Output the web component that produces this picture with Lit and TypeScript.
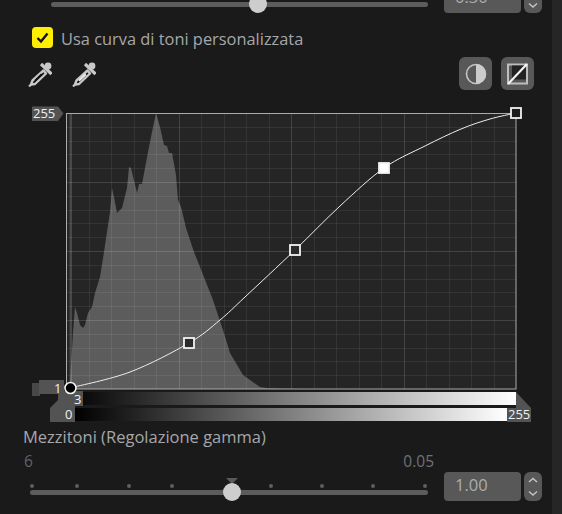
import { LitElement, html, css, svg } from "lit";
import { customElement, property } from "lit/decorators.js";

const HIST: [number, number][] = [[69,389],[70,383],[73,333],[75,307],[77,313],[80,325],[83,328],[85,325],[88,313],[92,307],[95,293],[100,277],[104,252],[107,232],[110,212],[112,188],[114,197],[117,213],[122,208],[127,188],[129,167],[131,168],[137,193],[139,184],[142,184],[148,152],[152,132],[156,113],[160,127],[164,145],[167,146],[169,153],[172,153],[176,175],[178,200],[181,207],[183,215],[186,228],[194,252],[200,267],[213,300],[223,330],[230,353],[243,375],[260,387],[267,388],[300,389]];
const CURVE: [number, number][] = [[70,388],[130,372],[189,343],[220,320],[245,297],[295,250],[340,206],[384,168],[425,146],[461,129],[490,119],[516,113]];

function spline(pts: [number, number][]): string {
  let d = `M${pts[0][0]} ${pts[0][1]}`;
  for (let i = 0; i < pts.length - 1; i++) {
    const p0 = pts[Math.max(i - 1, 0)], p1 = pts[i], p2 = pts[i + 1], p3 = pts[Math.min(i + 2, pts.length - 1)];
    const c1 = [p1[0] + (p2[0] - p0[0]) / 6, p1[1] + (p2[1] - p0[1]) / 6];
    const c2 = [p2[0] - (p3[0] - p1[0]) / 6, p2[1] - (p3[1] - p1[1]) / 6];
    d += ` C${c1[0]} ${c1[1]} ${c2[0]} ${c2[1]} ${p2[0]} ${p2[1]}`;
  }
  return d;
}

const FONT = css`"Open Sans", "Noto Sans", sans-serif`;

@customElement("value-slider")
class ValueSlider extends LitElement {
  @property({ type: Array }) ticks: number[] = [];
  @property({ type: Number }) thumb = 0;
  @property({ type: Boolean }) marker = false;
  @property() value = "";
  @property({ type: Number }) left = 0;

  static styles = css`
    :host { display: flex; align-items: flex-start; font-family: ${FONT}; }
    .rail { position: relative; width: 398px; height: 29px; flex: none; margin-right: 16px; }
    .track { position: absolute; left: 0; right: 0; top: 18px; height: 5px; border-radius: 3px; background: #5c5c5c; }
    .tick { position: absolute; top: 12px; width: 4px; height: 4px; margin-left: -2px; border-radius: 50%; background: #5e5e5e; }
    .thumb { position: absolute; top: 11px; width: 18px; height: 18px; margin-left: -9px; border-radius: 50%; background: #cdcdcd; }
    .marker { position: absolute; top: 6px; margin-left: -6px; width: 0; height: 0; border-left: 6px solid transparent; border-right: 6px solid transparent; border-top: 6px solid #5a5a5a; }
    .input { width: 77px; height: 29px; box-sizing: border-box; flex: none; background: #585858; border-radius: 4px; color: #adadad; font-size: 16.5px; line-height: 26px; padding-left: 11px; }
    .spin { width: 18px; height: 29px; flex: none; margin-left: 3px; background: #585858; border-radius: 6px; display: block; }
  `;

  render() {
    return html`
      <div class="rail" style="width:${428 - this.left}px">
        <div class="track"></div>
        ${this.ticks.map((t) => html`<div class="tick" style="left:${t - this.left}px"></div>`)}
        ${this.marker ? html`<div class="marker" style="left:${this.thumb - this.left}px"></div>` : ""}
        <div class="thumb" style="left:${this.thumb - this.left}px"></div>
      </div>
      <div class="input">${this.value}</div>
      <svg class="spin" viewBox="0 0 18 29" fill="none" stroke="#c4c4c4" stroke-width="1.5">
        <path d="M5 10l4-3.500 4 3.500M5 19.500l4 3.500 4-3.500"/>
      </svg>
    `;
  }
}

@customElement("app-root")
class AppRoot extends LitElement {
  static styles = css`
    :host { display: block; width: 562px; height: 514px; overflow: hidden; background: #1a1a1a; font-family: ${FONT}; color: #a4a8ac; }
    .page { display: flex; height: 514px; }
    .main { width: 552px; flex: none; }
    .scroll { flex: 1; background: #262626; }
    .top { margin: -16px 0 0 30px; }
    .top.first { margin-left: 51px; }
    .check { display: flex; align-items: center; gap: 8px; margin: 14px 0 0 32px; height: 21px; font-size: 16.4px; }
    .check span { padding-top: 1px; }
    .box { width: 21px; height: 21px; border-radius: 4px; background: #ffee00; display: block; flex: none; }
    .tools { display: flex; align-items: center; margin: 9px 18px 0 28px; height: 33px; }
    .drop { width: 24px; height: 26px; display: block; margin-right: 20px; }
    .spacer { flex: 1; }
    .btn { width: 33px; height: 33px; display: block; margin-left: 9px; }
    .graph { position: relative; height: 326px; margin-top: 10px; }
    .graph svg { display: block; position: absolute; inset: 0; width: 552px; height: 326px; }
    .lbl { position: absolute; color: #f0f0f0; font-size: 13px; line-height: 16px; }
    .title { margin: 0 0 0 23px; height: 22px; line-height: 22px; font-size: 16.5px; }
    .range { display: flex; justify-content: space-between; margin: 2px 118px 0 24px; height: 22px; line-height: 22px; font-size: 15.5px; color: #5f6468; }
    .range .max { color: #6d7276; }
    .bottom { margin: 0 0 0 30px; }
    .next { margin: 12px 0 0 23px; font-size: 16.5px; line-height: 22px; white-space: nowrap; }
  `;

  private grid() {
    const out = [];
    for (let i = 1; i < 20; i++) {
      const major = i % 5 === 0;
      const x = Math.round(66 + i * 22.5) + 0.5;
      const y = Math.round(113 + i * 13.8) + 0.5;
      const o = major ? 0.14 : 0.07;
      out.push(svg`<line x1=${x} x2=${x} y1="113" y2="389" stroke="#fff" stroke-opacity=${o}/>`);
      out.push(svg`<line x1="66" x2="516" y1=${y} y2=${y} stroke="#fff" stroke-opacity=${o}/>`);
    }
    return out;
  }

  private square(x: number, y: number, fill: string, size: number) {
    return svg`<rect x=${x - size / 2} y=${y - size / 2} width=${size} height=${size} fill=${fill} stroke="#f2f2f2" stroke-width="1.8"/>`;
  }

  private dropper(fill: string) {
    return html`<svg class="drop" viewBox="0 0 24 26">
      <circle cx="20" cy="5" r="3.4" fill="#c8c8c8"/>
      <path d="M13 3L23.500 13" stroke="#c8c8c8" stroke-width="3.200" fill="none"/>
      <path d="M15.500 9.500L4.500 19.500L3 23.500L7 23L18 12.500Z" fill="#111" stroke="#c8c8c8" stroke-width="2.400" stroke-linejoin="round"/>
      <path d="M13 12.500L6.500 19L7.500 20.500L14.500 14Z" fill=${fill}/>
      <path d="M3 23.500L1 25.500" stroke="#c8c8c8" stroke-width="2.200"/>
    </svg>`;
  }

  render() {
    const histD = "M" + HIST.map((p) => p.join(" ")).join("L") + "Z";
    const topTicks = Array.from({ length: 11 }, (_, i) => 53 + i * 37.3);
    const bottomTicks = [32, 77, 129, 172, 230, 271, 322, 373, 425];
    return html`
      <div class="page">
        <div class="main">
          <value-slider class="top first" .ticks=${topTicks} .thumb=${258} .left=${51} value="0.30"></value-slider>
          <div class="check">
            <svg class="box" viewBox="0 0 21 21"><path d="M5.500 11l3.500 3.500 6.500-8" fill="none" stroke="#111" stroke-width="2.400"/></svg>
            <span>Usa curva di toni personalizzata</span>
          </div>
          <div class="tools">
            ${this.dropper("#111")}
            ${this.dropper("#f0f0f0")}
            <div class="spacer"></div>
            <svg class="btn" viewBox="0 0 33 33">
              <rect width="33" height="33" rx="6" fill="#585858"/>
              <circle cx="17" cy="17" r="9.500" fill="none" stroke="#c4c4c4" stroke-width="1.600"/>
              <path d="M17 7a10 10 0 0 1 0 20Z" fill="#cccccc"/>
            </svg>
            <svg class="btn" viewBox="0 0 33 33">
              <rect width="33" height="33" rx="6" fill="#585858"/>
              <rect x="7" y="7.500" width="19" height="19" fill="none" stroke="#bdbdbd" stroke-width="2"/>
              <rect x="11" y="8.500" width="14" height="14" fill="#222"/>
              <path d="M7 27L26 7" stroke="#f4f4f4" stroke-width="2.200"/>
            </svg>
          </div>
          <div class="graph">
            <svg viewBox="0 100 552 326">
              <defs>
                <linearGradient id="g"><stop offset="0" stop-color="#000"/><stop offset="1" stop-color="#fff"/></linearGradient>
              </defs>
              <rect x="66" y="113" width="450" height="276" fill="#252525"/>
              <path d=${histD} fill="#5c5c5c"/>
              ${this.grid()}
              <rect x="69.500" y="113" width="2.500" height="276" fill="#fff" fill-opacity=".16"/>
              <rect x="66.500" y="113.500" width="449.500" height="275.500" fill="none" stroke="#ababab"/>
              <rect x="66" y="392" width="450" height="13" fill="url(#g)"/>
              <rect x="75" y="408" width="432" height="13" fill="url(#g)"/>
              <path d="M32 106.500H58L63.500 113.500L58 121H32Z" fill="#535353"/>
              <rect x="32" y="383" width="8" height="13" fill="#484848"/>
              <rect x="39" y="380" width="25" height="14" fill="#535353"/>
              <path d="M58 391H83V406H75V422H50V408L58 400Z" fill="#535353"/>
              <path d="M516 392L531 408V422H507V408H516Z" fill="#535353"/>
              <path d=${spline(CURVE)} fill="none" stroke="#eeeeee" stroke-width="1"/>
              <circle cx="70.500" cy="388" r="5.500" fill="#000" stroke="#f2f2f2" stroke-width="1.600"/>
              ${this.square(189, 343, "#2a2a2a", 10)}
              ${this.square(295, 250, "#2a2a2a", 10)}
              ${this.square(384, 168, "#ffffff", 10)}
              ${this.square(516, 113, "#1c1c1c", 10)}
            </svg>
            <span class="lbl" style="left:33px;top:5px">255</span>
            <span class="lbl" style="left:54px;top:280px">1</span>
            <span class="lbl" style="left:74px;top:291px">3</span>
            <span class="lbl" style="left:65px;top:306px">0</span>
            <span class="lbl" style="left:508px;top:306px">255</span>
          </div>
          <div class="title">Mezzitoni (Regolazione gamma)</div>
          <div class="range"><span>6</span><span class="max">0.05</span></div>
          <value-slider class="bottom" .ticks=${bottomTicks} .thumb=${232} .left=${30} marker value="1.00"></value-slider>
          <div class="next">Contrasto</div>
        </div>
        <div class="scroll"></div>
      </div>
    `;
  }
}
